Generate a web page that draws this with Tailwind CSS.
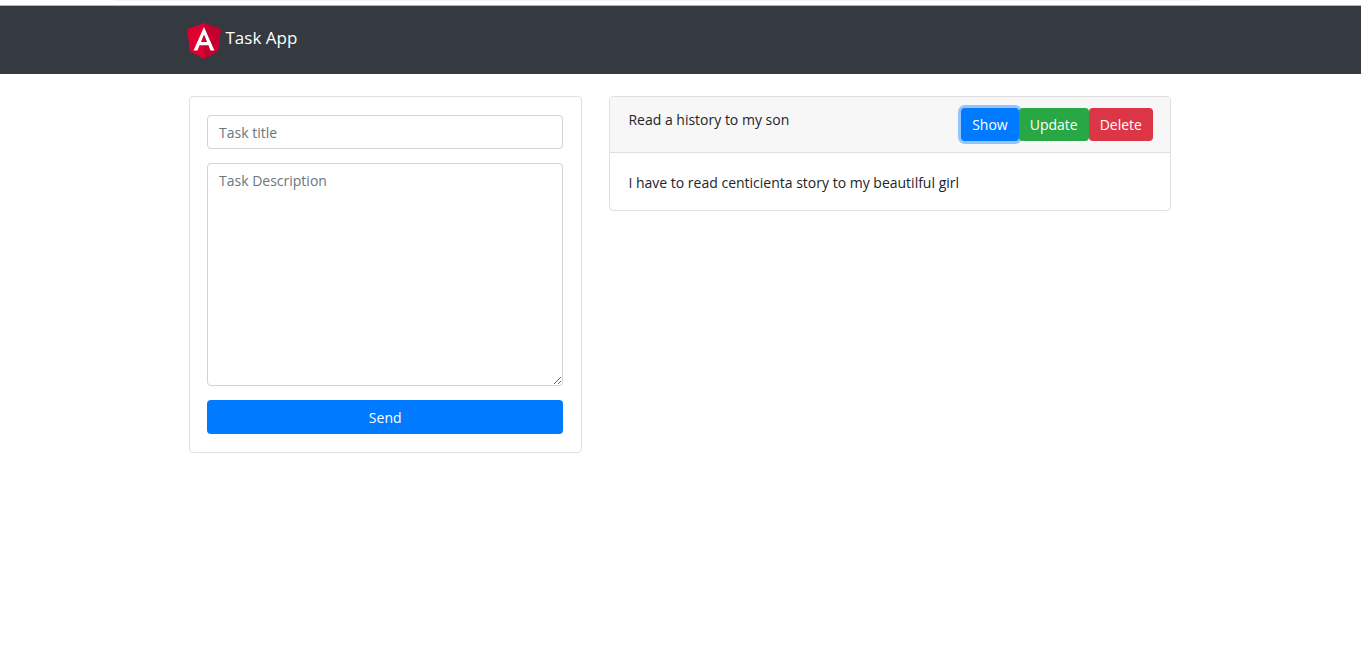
<!DOCTYPE html>
<html lang="en">
<head>
<meta charset="utf-8">
<meta name="viewport" content="width=device-width, initial-scale=1">
<title>Task App</title>
<script src="https://cdn.jsdelivr.net/npm/@tailwindcss/browser@4"></script>
</head>
<body class="bg-white font-['Segoe_UI','Open_Sans',sans-serif] text-sm text-[#212529]">
  <div class="h-[6px] border-b border-[#b0b8b6] pl-[114px] pr-[160px]"><div class="h-px bg-[#f1f3f4]"></div></div>
  <nav class="bg-[#343a40] h-[68px]">
    <div class="mx-auto flex h-full max-w-[988px] items-center pt-0.5">
      <a href="#" class="flex items-center gap-[5px] text-[17px] text-white">
        <svg class="h-9 w-[34px]" viewBox="31.9 30 186.2 200" aria-hidden="true">
          <path fill="#dd0031" d="M125 30 31.9 63.2l14.2 123.1L125 230l78.9-43.7 14.2-123.1z"/>
          <path fill="#c3002f" d="M125 30v200l78.9-43.7 14.2-123.1z"/>
          <path fill="#fff" d="M125 52.1 66.8 182.6h21.7l11.7-29.2h49.4l11.7 29.2H183zm17 83.3h-34l17-40.9z"/>
        </svg>
        <span class="pb-1.5">Task App</span>
      </a>
    </div>
  </nav>
  <main class="mx-auto mt-[22px] grid max-w-[983px] grid-cols-12 items-start gap-[27px] pr-px">
    <form class="col-span-5 flex flex-col gap-3.5 rounded-[4px] border border-[#dfdfdf] py-[18px] pl-[17px] pr-[18px]">
      <input type="text" aria-label="Task title" placeholder="Task title" class="h-[34px] w-full rounded-[4px] border border-[#ced4da] px-[11px] pt-px placeholder:text-[#6c757d]">
      <textarea aria-label="Task Description" placeholder="Task Description" class="block h-[223px] w-full resize-y rounded-[4px] border border-[#ced4da] px-[11px] py-[7px] placeholder:text-[#6c757d]"></textarea>
      <button type="button" class="h-[34px] w-full rounded-[4px] bg-[#007bff] pt-0.5 font-medium text-white">Send</button>
    </form>
    <article class="col-span-7 rounded-[4px] border border-[#dfdfdf]">
      <header class="flex items-start justify-between rounded-t-[3px] border-b border-[#dfdfdf] bg-[#f7f7f7] py-[11px] pl-[18px] pr-[17px]">
        <h2 class="leading-6">Read a history to my son</h2>
        <div class="flex font-medium text-white">
          <button type="button" class="h-[33px] rounded-[4px] bg-[#007bff] px-[11px] shadow-[0_0_0_3px_#007bff66]">Show</button>
          <button type="button" class="h-[33px] rounded-[4px] bg-[#28a745] px-[11px]">Update</button>
          <button type="button" class="h-[33px] rounded-[4px] bg-[#dc3545] px-[11px]">Delete</button>
        </div>
      </header>
      <p class="px-[18px] pb-[17px] pt-[19px] leading-[21px]">I have to read centicienta story to my beautilful girl</p>
    </article>
  </main>
</body>
</html>
